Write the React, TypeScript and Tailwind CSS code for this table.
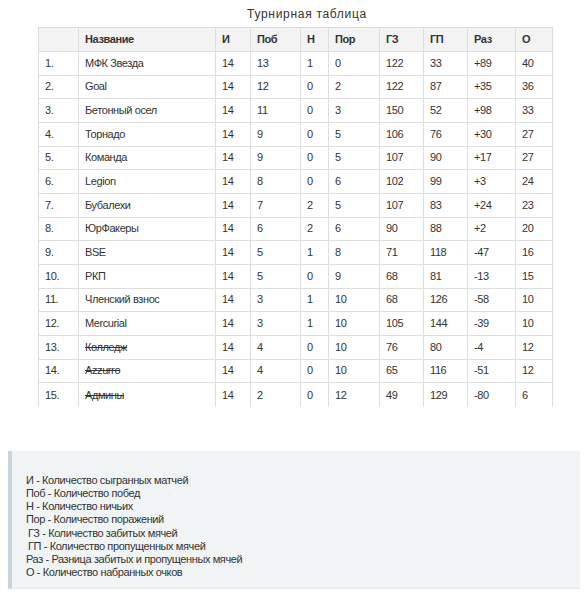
const columns = [
  { label: "", w: "w-[40px]" },
  { label: "Название", w: "w-[137px]" },
  { label: "И", w: "w-[35px]" },
  { label: "Поб", w: "w-[50px]" },
  { label: "Н", w: "w-[28px]" },
  { label: "Пор", w: "w-[51px]" },
  { label: "ГЗ", w: "w-[44px]" },
  { label: "ГП", w: "w-[44px]" },
  { label: "Раз", w: "w-[48px]" },
  { label: "О", w: "w-[37px]" },
];

type Team = [string, number, number, number, number, number, number, string, number, boolean?];

const teams: Team[] = [
  ["МФК Звезда", 14, 13, 1, 0, 122, 33, "+89", 40],
  ["Goal", 14, 12, 0, 2, 122, 87, "+35", 36],
  ["Бетонный осел", 14, 11, 0, 3, 150, 52, "+98", 33],
  ["Торнадо", 14, 9, 0, 5, 106, 76, "+30", 27],
  ["Команда", 14, 9, 0, 5, 107, 90, "+17", 27],
  ["Legion", 14, 8, 0, 6, 102, 99, "+3", 24],
  ["Бубалехи", 14, 7, 2, 5, 107, 83, "+24", 23],
  ["ЮрФакеры", 14, 6, 2, 6, 90, 88, "+2", 20],
  ["BSE", 14, 5, 1, 8, 71, 118, "-47", 16],
  ["РКП", 14, 5, 0, 9, 68, 81, "-13", 15],
  ["Членский взнос", 14, 3, 1, 10, 68, 126, "-58", 10],
  ["Mercurial", 14, 3, 1, 10, 105, 144, "-39", 10],
  ["Колледж", 14, 4, 0, 10, 76, 80, "-4", 12, true],
  ["Azzurro", 14, 4, 0, 10, 65, 116, "-51", 12, true],
  ["Админы", 14, 2, 0, 12, 49, 129, "-80", 6, true],
];

const legend = [
  "И - Количество сыгранных матчей",
  "Поб - Количество побед",
  "Н - Количество ничьих",
  "Пор - Количество поражений",
  "ГЗ - Количество забитых мячей",
  "ГП - Количество пропущенных мячей",
  "Раз - Разница забитых и пропущенных мячей",
  "О - Количество набранных очков",
];

function Row({ cells, header, struck, last }: { cells: (string | number)[]; header?: boolean; struck?: boolean; last?: boolean }) {
  return (
    <div
      className={`flex border-[#dedede] ${last ? "" : "border-b"} ${
        header ? "h-[24px] bg-[#f3f3f3] font-bold" : "h-[23.67px]"
      }`}
    >
      {cells.map((c, i) => (
        <div
          key={i}
          className={`${columns[i].w} flex items-center border-r border-[#dedede] pl-[6px] ${
            struck && i === 1 ? "line-through" : ""
          }`}
        >
          {c}
        </div>
      ))}
    </div>
  );
}

export default function App() {
  return (
    <div className="h-[604px] w-[588px] bg-white text-[11px] leading-[13px] text-[#333] font-['Liberation_Sans',Arial,sans-serif]">
      <div className="ml-[38px] w-[514px] pl-6 pt-[8px] text-center text-[12px] tracking-[0.7px]">Турнирная таблица</div>

      <div className="ml-[38px] mt-[6px] w-[515px] border-l border-t border-[#dedede] tracking-[-0.4px]">
        <Row header cells={columns.map((c) => c.label)} />
        {teams.map((t, i) => (
          <Row
            key={t[0]}
            struck={t[9]}
            last={i === teams.length - 1}
            cells={[`${i + 1}.`, t[0], t[1], t[2], t[3], t[4], t[5], t[6], t[7], t[8]]}
          />
        ))}
      </div>

      <div className="ml-[8px] mt-[44px] h-[138px] w-[572px] border-b border-l-4 border-b-[#e3e8e8] border-l-[#c6d4db] bg-[#f1f4f4] pl-[14px] pt-[23px] leading-[13.2px] tracking-[-0.4px]">
        {legend.map((l) => (
          <div key={l} className={l.startsWith("Г") ? "pl-[2px]" : ""}>
            {l}
          </div>
        ))}
      </div>
    </div>
  );
}
